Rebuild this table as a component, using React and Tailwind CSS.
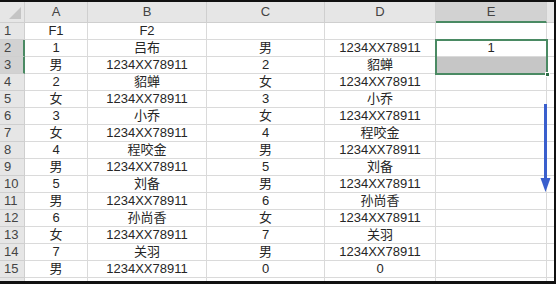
const cols = ['A', 'B', 'C', 'D', 'E']

const rows = [
  ['F1', 'F2', '', '', ''],
  ['1', '吕布', '男', '1234XX78911', '1'],
  ['男', '1234XX78911', '2', '貂蝉', ''],
  ['2', '貂蝉', '女', '1234XX78911', ''],
  ['女', '1234XX78911', '3', '小乔', ''],
  ['3', '小乔', '女', '1234XX78911', ''],
  ['女', '1234XX78911', '4', '程咬金', ''],
  ['4', '程咬金', '男', '1234XX78911', ''],
  ['男', '1234XX78911', '5', '刘备', ''],
  ['5', '刘备', '男', '1234XX78911', ''],
  ['男', '1234XX78911', '6', '孙尚香', ''],
  ['6', '孙尚香', '女', '1234XX78911', ''],
  ['女', '1234XX78911', '7', '关羽', ''],
  ['7', '关羽', '男', '1234XX78911', ''],
  ['男', '1234XX78911', '0', '0', ''],
  ['', '', '', '', ''],
]

function App() {
  return (
    <div
      className="relative w-[556px] h-[284px] overflow-hidden bg-white border-t-2 border-r-2 border-b-[3px] border-[#111] text-[13px] text-[#262626]"
      style={{ fontFamily: '"Liberation Sans", "Noto Sans CJK SC", sans-serif' }}
    >
      <div className="grid grid-cols-[25px_63px_119px_118px_111px_111px_1fr] grid-rows-[21px] auto-rows-[17px]">
        {/* header row */}
        <div className="bg-[#e6e6e6] border-r border-b border-[#cfcfcf] relative">
          <svg className="absolute right-[3px] bottom-[3px]" width="12" height="12" viewBox="0 0 12 12">
            <polygon points="12,0 12,12 0,12" fill="#c4c4c4" />
          </svg>
        </div>
        {cols.map(c => (
          <div
            key={c}
            className={`flex items-center justify-center text-[#444] ${
              c === 'E'
                ? 'bg-[#d2d2d2] border-r border-[#cfcfcf] border-b-2 border-b-[#4a8a63]'
                : 'bg-[#e6e6e6] border-r border-b border-[#cfcfcf]'
            }`}
          >
            {c}
          </div>
        ))}
        <div className="bg-[#e6e6e6] border-b border-[#cfcfcf]" />

        {rows.map((r, i) => {
          const n = i + 1
          const sel = n === 2 || n === 3
          return [
            <div
              key={`h${n}`}
              className={`flex items-center pl-[4px] text-[#444] border-b border-[#cfcfcf] ${
                sel ? 'bg-[#d2d2d2] border-r-2 border-r-[#4a8a63]' : 'bg-[#e6e6e6] border-r border-r-[#cfcfcf]'
              }`}
            >
              {n <= 15 ? n : ''}
            </div>,
            ...r.map((v, j) => (
              <div
                key={`c${n}-${j}`}
                className={`flex items-center justify-center border-r border-b border-[#dadada] whitespace-nowrap ${
                  n === 3 && j === 4 ? 'bg-[#c6c6c6]' : ''
                }`}
              >
                {v}
              </div>
            )),
            <div key={`x${n}`} className="border-b border-[#dadada]" />,
          ]
        })}
      </div>

      {/* selection E2:E3 */}
      <div className="absolute left-[435px] top-[37px] w-[113px] h-[36px] border-2 border-[#4a8a63] pointer-events-none" />
      <div className="absolute left-[545px] top-[70px] w-[5px] h-[5px] bg-[#2f6e48] border border-white" />

      {/* drag arrow */}
      <svg className="absolute left-[538px] top-[102px]" width="14" height="90" viewBox="0 0 14 90">
        <line x1="7.5" y1="0" x2="7.5" y2="76" stroke="#3a5fcd" strokeWidth="3" />
        <polygon points="2.5,74 12.5,74 7.5,88" fill="#3a5fcd" />
      </svg>
    </div>
  )
}

export default App
